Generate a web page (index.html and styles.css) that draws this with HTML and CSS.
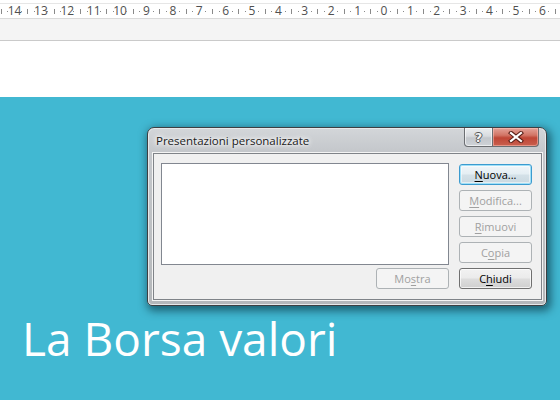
FILE: index.html
```html
<!DOCTYPE html>
<html lang="it">
<head>
<meta charset="utf-8">
<title>Presentazioni personalizzate</title>
<link rel="stylesheet" href="styles.css">
</head>
<body>
<div class="ruler">
  <div class="ruler-track">
    <div class="unit"><span class="mark num"></span><span class="mark"><i class="dot"></i></span><span class="mark"><i class="bar"></i></span><span class="mark"><i class="dot"></i></span></div>
    <div class="unit"><span class="mark num">14</span><span class="mark"><i class="dot"></i></span><span class="mark"><i class="bar"></i></span><span class="mark"><i class="dot"></i></span></div>
    <div class="unit"><span class="mark num">13</span><span class="mark"><i class="dot"></i></span><span class="mark"><i class="bar"></i></span><span class="mark"><i class="dot"></i></span></div>
    <div class="unit"><span class="mark num">12</span><span class="mark"><i class="dot"></i></span><span class="mark"><i class="bar"></i></span><span class="mark"><i class="dot"></i></span></div>
    <div class="unit"><span class="mark num">11</span><span class="mark"><i class="dot"></i></span><span class="mark"><i class="bar"></i></span><span class="mark"><i class="dot"></i></span></div>
    <div class="unit"><span class="mark num">10</span><span class="mark"><i class="dot"></i></span><span class="mark"><i class="bar"></i></span><span class="mark"><i class="dot"></i></span></div>
    <div class="unit"><span class="mark num">9</span><span class="mark"><i class="dot"></i></span><span class="mark"><i class="bar"></i></span><span class="mark"><i class="dot"></i></span></div>
    <div class="unit"><span class="mark num">8</span><span class="mark"><i class="dot"></i></span><span class="mark"><i class="bar"></i></span><span class="mark"><i class="dot"></i></span></div>
    <div class="unit"><span class="mark num">7</span><span class="mark"><i class="dot"></i></span><span class="mark"><i class="bar"></i></span><span class="mark"><i class="dot"></i></span></div>
    <div class="unit"><span class="mark num">6</span><span class="mark"><i class="dot"></i></span><span class="mark"><i class="bar"></i></span><span class="mark"><i class="dot"></i></span></div>
    <div class="unit"><span class="mark num">5</span><span class="mark"><i class="dot"></i></span><span class="mark"><i class="bar"></i></span><span class="mark"><i class="dot"></i></span></div>
    <div class="unit"><span class="mark num">4</span><span class="mark"><i class="dot"></i></span><span class="mark"><i class="bar"></i></span><span class="mark"><i class="dot"></i></span></div>
    <div class="unit"><span class="mark num">3</span><span class="mark"><i class="dot"></i></span><span class="mark"><i class="bar"></i></span><span class="mark"><i class="dot"></i></span></div>
    <div class="unit"><span class="mark num">2</span><span class="mark"><i class="dot"></i></span><span class="mark"><i class="bar"></i></span><span class="mark"><i class="dot"></i></span></div>
    <div class="unit"><span class="mark num">1</span><span class="mark"><i class="dot"></i></span><span class="mark"><i class="bar"></i></span><span class="mark"><i class="dot"></i></span></div>
    <div class="unit"><span class="mark num">0</span><span class="mark"><i class="dot"></i></span><span class="mark"><i class="bar"></i></span><span class="mark"><i class="dot"></i></span></div>
    <div class="unit"><span class="mark num">1</span><span class="mark"><i class="dot"></i></span><span class="mark"><i class="bar"></i></span><span class="mark"><i class="dot"></i></span></div>
    <div class="unit"><span class="mark num">2</span><span class="mark"><i class="dot"></i></span><span class="mark"><i class="bar"></i></span><span class="mark"><i class="dot"></i></span></div>
    <div class="unit"><span class="mark num">3</span><span class="mark"><i class="dot"></i></span><span class="mark"><i class="bar"></i></span><span class="mark"><i class="dot"></i></span></div>
    <div class="unit"><span class="mark num">4</span><span class="mark"><i class="dot"></i></span><span class="mark"><i class="bar"></i></span><span class="mark"><i class="dot"></i></span></div>
    <div class="unit"><span class="mark num">5</span><span class="mark"><i class="dot"></i></span><span class="mark"><i class="bar"></i></span><span class="mark"><i class="dot"></i></span></div>
    <div class="unit"><span class="mark num">6</span><span class="mark"><i class="dot"></i></span><span class="mark"><i class="bar"></i></span><span class="mark"><i class="dot"></i></span></div>
  </div>
</div>
<div class="ruler-gap"></div>
<div class="page-white"></div>
<div class="slide">
  <h1 class="slide-title">La Borsa valori</h1>
  <div class="dialog">
    <div class="titlebar">
      <span class="title">Presentazioni personalizzate</span>
      <div class="caption-btns">
        <div class="cap-btn help">?</div>
        <div class="cap-btn close">
          <svg width="16" height="12" viewBox="0 0 16 12">
            <path d="M3 2 L13 10 M13 2 L3 10" stroke="#5a2018" stroke-width="4.2" stroke-linecap="square" fill="none"/>
            <path d="M3 2 L13 10 M13 2 L3 10" stroke="#ffffff" stroke-width="2.2" stroke-linecap="square" fill="none"/>
          </svg>
        </div>
      </div>
    </div>
    <div class="client">
      <div class="listbox"></div>
      <div class="btn default"><u>N</u>uova...</div>
      <div class="btn disabled"><u>M</u>odifica...</div>
      <div class="btn disabled"><u>R</u>imuovi</div>
      <div class="btn disabled">C<u>o</u>pia</div>
      <div class="btn disabled mostra">Mo<u>s</u>tra</div>
      <div class="btn">C<u>h</u>iudi</div>
    </div>
  </div>
</div>
</body>
</html>
```
FILE: styles.css
```css
html, body {
  margin: 0;
  padding: 0;
}
body {
  width: 560px;
  height: 400px;
  overflow: hidden;
  background: #ffffff;
  font-family: "Open Sans", "Noto Sans", sans-serif;
}

/* ruler */
.ruler {
  height: 14px;
  margin-top: 3px;
  border-top: 1px solid #e6e6e6;
  border-bottom: 1px solid #dadada;
  background: #ffffff;
  overflow: hidden;
  box-sizing: content-box;
}
.ruler-track {
  display: flex;
  margin-left: -15.2px;
  height: 14px;
}
.unit {
  flex: none;
  width: 26.4px;
  display: flex;
  height: 14px;
}
.mark {
  flex: none;
  width: 6.6px;
  display: flex;
  justify-content: center;
  align-items: center;
}
.num {
  font-size: 12px;
  color: #505050;
  line-height: 14px;
}
.dot {
  display: block;
  width: 1px;
  height: 1px;
  background: #8a8a8a;
}
.bar {
  display: block;
  width: 1px;
  height: 5px;
  background: #8a8a8a;
}
.ruler-gap {
  height: 21px;
  background: #f4f4f4;
  border-bottom: 1px solid #cacaca;
}
.page-white {
  height: 56px;
  background: #ffffff;
}

/* slide */
.slide {
  height: 304px;
  background: #41b8d2;
  overflow: hidden;
}
.slide-title {
  margin: 0;
  padding: 218px 0 0 22px;
  font-family: "Open Sans", sans-serif;
  font-weight: 400;
  font-size: 46px;
  line-height: 46px;
  color: #ffffff;
}

/* dialog window */
.dialog {
  position: absolute;
  left: 147px;
  top: 127px;
  width: 400px;
  height: 179px;
  box-sizing: border-box;
  border: 1px solid #3d3f42;
  border-radius: 7px 7px 5px 5px;
  background: linear-gradient(#d3d6d9 0px, #c4c7cb 24px, #bdc0c3 60%, #b4b7ba 100%);
  box-shadow: 2px 3px 9px 2px rgba(0, 30, 40, 0.55), inset 0 0 0 1px #e6e8ea;
  padding: 0 4px 5px 5px;
  display: flex;
  flex-direction: column;
  font-family: "Open Sans", "Noto Sans", sans-serif;
  font-size: 11px;
}
.titlebar {
  height: 25px;
  flex: none;
  display: flex;
  justify-content: space-between;
  align-items: flex-start;
}
.title {
  padding: 6px 0 0 3px;
  font-size: 11.5px;
  line-height: 14px;
  color: #1a1a1a;
  text-shadow: 0 0 6px #ffffff, 0 0 6px #ffffff, 0 0 3px #ffffff;
}
.caption-btns {
  display: flex;
  margin-right: 3px;
}
.cap-btn {
  height: 19px;
  box-sizing: border-box;
  border: 1px solid #6b6e72;
  border-top: none;
  display: flex;
  align-items: center;
  justify-content: center;
}
.help {
  width: 29px;
  border-radius: 0 0 0 4px;
  background: linear-gradient(#eceef0 0%, #d8dbdf 45%, #c3c7cc 55%, #cfd3d7 100%);
  box-shadow: inset 0 0 0 1px rgba(255, 255, 255, 0.6);
  font-family: "DejaVu Sans", sans-serif;
  font-weight: bold;
  font-size: 13px;
  color: #f4f4f4;
  text-shadow: 1px 0 0 #555, -1px 0 0 #555, 0 1px 0 #555, 0 -1px 0 #555;
}
.close {
  width: 46px;
  border-left: none;
  border-radius: 0 0 4px 0;
  background: linear-gradient(#e3a399 0%, #d27566 40%, #bf4636 55%, #c9604f 100%);
  box-shadow: inset 0 0 0 1px rgba(255, 200, 190, 0.5);
}
.client {
  flex: 1;
  background: #f0f0f0;
  border: 1px solid #7f8388;
  box-shadow: 0 0 0 1px #f4f4f4;
  padding: 10px 8px 8px 7px;
  display: grid;
  grid-template-columns: 288px 73px;
  grid-template-rows: repeat(5, 21px);
  column-gap: 10px;
  row-gap: 5px;
}
.listbox {
  grid-column: 1;
  grid-row: 1 / 5;
  margin: -1px 0 -2px 0;
  background: #ffffff;
  border: 1px solid #828790;
}
.btn {
  grid-column: 2;
  box-sizing: border-box;
  height: 21px;
  border: 1px solid #707070;
  border-radius: 3px;
  background: linear-gradient(#f2f2f2 0%, #ebebeb 48%, #dddddd 52%, #cfcfcf 100%);
  box-shadow: inset 0 0 0 1px rgba(255, 255, 255, 0.7);
  color: #000000;
  text-align: center;
  line-height: 19px;
  font-size: 11px;
}
.btn u {
  text-underline-offset: 2px;
}
.btn.default {
  border-color: #3c9bcf;
  box-shadow: inset 0 0 0 1px #9fe0f8, inset 0 0 0 2px rgba(255, 255, 255, 0.5);
  background: linear-gradient(#f1f6f9 0%, #e4eef3 48%, #d4e1e8 52%, #c9d8e0 100%);
}
.btn.disabled {
  border-color: #adb2b5;
  background: #f4f4f4;
  box-shadow: none;
  color: #a0a0a0;
}
.btn.mostra {
  grid-column: 1;
  grid-row: 5;
  justify-self: end;
  width: 73px;
}
```
